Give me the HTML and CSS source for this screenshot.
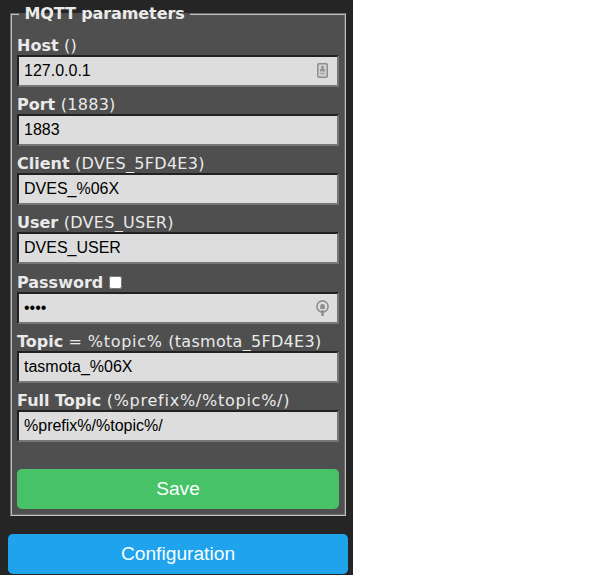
FILE: index.html
```html
<!DOCTYPE html>
<html lang="en">
  <head>
    <meta charset="UTF-8" />
    <meta name="viewport" content="width=device-width, initial-scale=1.0" />
    <title>MQTT parameters</title>
    <link rel="stylesheet" href="styles.css">
  </head>
  <body>
    <div class="page">
      <form class="mqtt-form">
        <fieldset>
          <legend><b>&nbsp;MQTT parameters&nbsp;</b></legend>

          <div class="field">
            <label><b>Host</b> ()</label>
            <div class="input-wrap">
              <input type="text" value="127.0.0.1">
              <svg class="input-icon icon-doc" width="11" height="15" viewBox="0 0 11 15">
                <rect x="0.75" y="0.75" width="9.5" height="13.5" rx="1.2" fill="#d2d2d2" stroke="#8e8e8e" stroke-width="1.5" />
                <rect x="4.5" y="3" width="2" height="3.5" fill="#858585" />
                <rect x="3" y="6" width="5" height="2.5" fill="#959595" />
                <rect x="3" y="9.5" width="5" height="2" fill="#b0b0b0" />
              </svg>
            </div>
          </div>

          <div class="field">
            <label><b>Port</b> (1883)</label>
            <input type="text" value="1883">
          </div>

          <div class="field">
            <label><b>Client</b> (DVES_5FD4E3)</label>
            <input type="text" value="DVES_%06X">
          </div>

          <div class="field">
            <label><b>User</b> (DVES_USER)</label>
            <input type="text" value="DVES_USER">
          </div>

          <div class="field field-pass">
            <label><b>Password</b> <input class="show-pass" type="checkbox"></label>
            <div class="input-wrap">
              <input type="password" value="1234">
              <svg class="input-icon icon-round" width="13" height="16" viewBox="0 0 13 16">
                <circle cx="6.5" cy="6.5" r="5.6" fill="none" stroke="#8e8e8e" stroke-width="1.6" />
                <path d="M4.2 9V6.2a2.3 2.3 0 0 1 4.6 0V9z" fill="#8e8e8e" />
                <rect x="5.3" y="10" width="2.4" height="6" fill="#8e8e8e" />
              </svg>
            </div>
          </div>

          <div class="field">
            <label><b>Topic</b> = <span class="pct">%topic%</span> (tasmota_5FD4E3)</label>
            <input type="text" value="tasmota_%06X">
          </div>

          <div class="field">
            <label><b>Full Topic</b> <span class="pct">(%prefix%/%topic%/)</span></label>
            <input type="text" value="%prefix%/%topic%/">
          </div>

          <button class="btn btn-save" type="button">Save</button>
        </fieldset>
      </form>

      <button class="btn btn-config" type="button">Configuration</button>
    </div>
  </body>
</html>
```

FILE: styles.css
```css
* {
  box-sizing: border-box;
}
html,
body {
  height: 100%;
}
body {
  margin: 0;
  background: #fff;
  overflow: hidden;
}
.page {
  width: 353px;
  height: 100%;
  padding: 4px 5px 0 8px;
  background: #252525;
  color: #eaeaea;
  font-family: "DejaVu Sans", Verdana, sans-serif;
  font-size: 16px;
  overflow: hidden;
}
fieldset {
  margin: 0 2px;
  padding: 5px 5px 5px;
  min-width: 0;
  background: #4f4f4f;
  border: 2px groove #c0c0c0;
}
legend {
  padding: 0;
  margin: 0 0 0 2px;
  line-height: 19px;
  letter-spacing: -0.1px;
}
.field {
  display: flex;
  flex-direction: column;
  height: 59px;
  padding-top: 8px;
}
.field-pass {
  height: 60px;
  padding-top: 9px;
}
.field label {
  display: block;
  height: 19px;
  line-height: 19px;
  white-space: nowrap;
  letter-spacing: 0.3px;
}
.field label b {
  letter-spacing: 0;
}
.field label .pct {
  letter-spacing: 0.75px;
}
.input-wrap {
  position: relative;
}
input[type="text"],
input[type="password"] {
  display: block;
  width: 100%;
  height: 32px;
  padding: 5px;
  background: #ddd;
  color: #000;
  border: 2px inset #767676;
  border-radius: 0;
  font-family: "Liberation Sans", Arial, sans-serif;
  font-size: 16px;
}
.show-pass {
  width: 13px;
  height: 13px;
  margin: 0;
  vertical-align: -1px;
}
.input-icon {
  position: absolute;
  top: 8px;
}
.icon-doc {
  right: 11px;
}
.icon-round {
  right: 10px;
}
.btn {
  display: block;
  width: 100%;
  height: 40px;
  padding: 0;
  border: 0;
  border-radius: 4.8px;
  color: #faffff;
  font-family: "Liberation Sans", Arial, sans-serif;
  font-size: 19.2px;
}
.btn-save {
  margin-top: 27px;
  background: #47c266;
}
.btn-config {
  margin-top: 18px;
  background: #1fa3ec;
}
```
